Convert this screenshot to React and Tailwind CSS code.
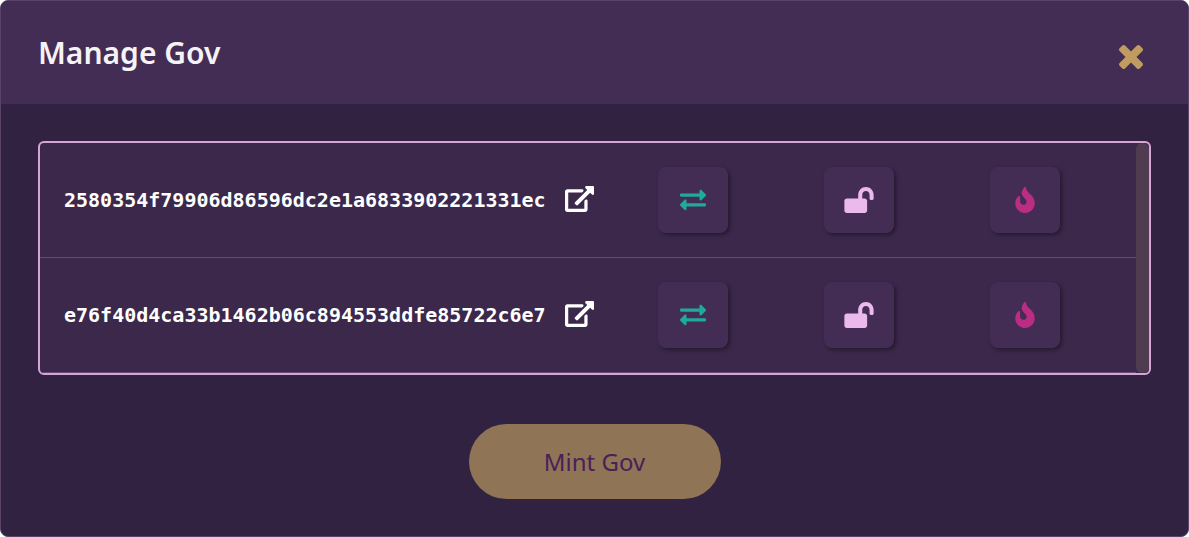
import React from "react";
import { FaExchangeAlt, FaLockOpen, FaFire } from "react-icons/fa";

const tokens = [
  "2580354f79906d86596dc2e1a6833902221331ec",
  "e76f40d4ca33b1462b06c894553ddfe85722c6e7",
];

function CloseIcon() {
  return (
    <svg viewBox="302 366 1188 1188" className="size-6" fill="currentColor" aria-hidden="true">
      <path d="M1490 1322q0 40-28 68l-136 136q-28 28-68 28t-68-28l-294-294-294 294q-28 28-68 28t-68-28l-136-136q-28-28-28-68t28-68l294-294-294-294q-28-28-28-68t28-68l136-136q28-28 68-28t68 28l294 294 294-294q28-28 68-28t68 28l136 136q28 28 28 68t-28 68l-294 294 294 294q28 28 28 68z" />
    </svg>
  );
}

function ExternalLinkIcon() {
  return (
    <svg viewBox="0 0 576 512" className="h-[26px] w-[29px]" fill="currentColor" aria-hidden="true">
      <path d="M576 24v127.984c0 21.461-25.96 31.98-40.971 16.971l-35.707-35.709-243.523 243.523c-9.373 9.373-24.568 9.373-33.941 0l-22.627-22.627c-9.373-9.373-9.373-24.569 0-33.941L442.756 76.676l-35.703-35.705C391.982 25.9 402.656 0 424.024 0H552c13.255 0 24 10.745 24 24zM407.029 270.794l-16 16A23.999 23.999 0 0 0 384 303.765V448H64V128h264a24.003 24.003 0 0 0 16.97-7.029l16-16C376.089 89.851 365.381 64 344 64H48C21.49 64 0 85.49 0 112v352c0 26.51 21.49 48 48 48h352c26.51 0 48-21.49 48-48V287.764c0-21.382-25.852-32.09-40.971-16.97z" />
    </svg>
  );
}

function ActionButton({ label, children }) {
  return (
    <button
      type="button"
      aria-label={label}
      className="flex h-[66px] w-[70px] items-center justify-center justify-self-center rounded-lg bg-[#442d54] shadow-[2px_2px_4px_rgba(0,0,0,0.4)]"
    >
      {children}
    </button>
  );
}

function TokenRow({ id }) {
  return (
    <li className="grid grid-cols-[minmax(0,1fr)_166px_166px_166px] items-center border-b border-[#674b77] py-6 pr-7 pl-6">
      <div className="flex items-center justify-between pr-4 text-white">
        <span className="font-['DejaVu_Sans_Mono',monospace] text-xl font-bold">{id}</span>
        <a href="#token" aria-label={`Open ${id}`} className="mb-0.5">
          <ExternalLinkIcon />
        </a>
      </div>
      <ActionButton label="Transfer">
        <FaExchangeAlt className="size-[26px] text-[#1fab9c]" />
      </ActionButton>
      <ActionButton label="Unlock">
        <FaLockOpen className="h-[26px] w-[30px] text-[#ebb9eb]" />
      </ActionButton>
      <ActionButton label="Burn">
        <FaFire className="h-[26px] w-5 text-[#ba2d83]" />
      </ActionButton>
    </li>
  );
}

export default function App() {
  return (
    <main className="overflow-hidden rounded-lg border border-[#5a4268] bg-[#322242] font-['Noto_Sans',sans-serif]">
      <header className="flex items-center justify-between bg-[#442d54] px-[37px] py-7">
        <h1 className="text-3xl leading-[47px] font-semibold text-[#f5f3f6]">Manage Gov</h1>
        <button type="button" aria-label="Close" className="mt-2 mr-2 text-[#c09c60]">
          <CloseIcon />
        </button>
      </header>
      <div className="flex flex-col items-center p-[37px]">
        <section className="flex w-full overflow-hidden rounded-md border-2 border-[#d5a5d6] bg-[#3c284b]">
          <ul className="flex-1">
            {tokens.map((id) => (
              <TokenRow key={id} id={id} />
            ))}
          </ul>
          <div className="w-[13px] rounded-md bg-[#503c50]" />
        </section>
        <button
          type="button"
          className="mt-[49px] h-[75px] w-[252px] rounded-full bg-[#8f7455] text-2xl text-[#4a2058]"
        >
          Mint Gov
        </button>
      </div>
    </main>
  );
}
